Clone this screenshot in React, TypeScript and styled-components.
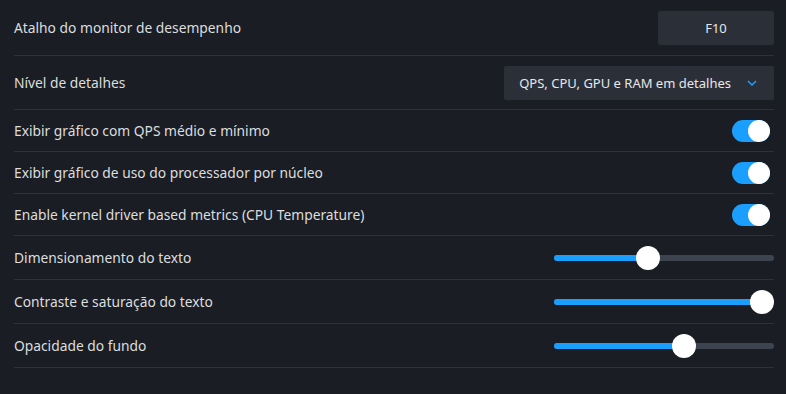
import styled, { createGlobalStyle } from "styled-components";

const GlobalStyle = createGlobalStyle`
    html, body {
        margin: 0;
        padding: 0;
        background: #1a1d24;
    }
    body {
        font-family: "Noto Sans", "Liberation Sans", Arial, sans-serif;
    }
`;

const Wrapper = styled.div`
    display: flex;
    flex-direction: column;
    width: 786px;
    height: 394px;
    padding: 0 12px 0 14px;
    box-sizing: border-box;
    background: #1a1d24;
`;

const Row = styled.div<{ $h: number }>`
    display: flex;
    align-items: center;
    justify-content: space-between;
    height: ${(p) => p.$h}px;
    border-bottom: 1px solid #2c313a;
`;

const Label = styled.span`
    font-size: 13.8px;
    color: #dcdedf;
    white-space: nowrap;
`;

const KeyButton = styled.div`
    width: 116px;
    height: 34px;
    border-radius: 2px;
    background: #2b2f38;
    color: #e6e8ea;
    font-size: 13px;
    display: flex;
    align-items: center;
    justify-content: center;
`;

const Dropdown = styled.div`
    width: 270px;
    height: 34px;
    border-radius: 2px;
    background: #2b2f38;
    color: #e6e8ea;
    font-size: 13px;
    white-space: nowrap;
    display: flex;
    align-items: center;
    gap: 16px;
    padding: 0 17px 0 14px;
    box-sizing: border-box;
    justify-content: flex-end;

    svg {
        flex-shrink: 0;
    }
`;

const Toggle = styled.div<{ $on: boolean }>`
    width: 38px;
    height: 22px;
    border-radius: 11px;
    background: ${(p) => (p.$on ? "#1a9fff" : "#3d4450")};
    display: flex;
    justify-content: ${(p) => (p.$on ? "flex-end" : "flex-start")};
    margin-right: 4px;
`;

const Knob = styled.div`
    width: 22px;
    height: 22px;
    border-radius: 50%;
    background: #ffffff;
`;

const SliderBox = styled.div`
    position: relative;
    width: 220px;
    height: 24px;
    display: flex;
    align-items: center;
`;

const Track = styled.div`
    width: 100%;
    height: 6px;
    border-radius: 3px;
    background: #3d4450;
    overflow: hidden;
`;

const Fill = styled.div`
    height: 100%;
    background: #1a9fff;
`;

const Thumb = styled.div`
    position: absolute;
    top: 0;
    width: 24px;
    height: 24px;
    border-radius: 50%;
    background: #ffffff;
`;

function Slider({ value }: { value: number }) {
    const center = 12 + value * 196;
    return (
        <SliderBox>
            <Track>
                <Fill style={{ width: `${center}px` }} />
            </Track>
            <Thumb style={{ left: `${center - 12}px` }} />
        </SliderBox>
    );
}

const toggles = [
    "Exibir gráfico com QPS médio e mínimo",
    "Exibir gráfico de uso do processador por núcleo",
    "Enable kernel driver based metrics (CPU Temperature)",
];

const sliders = [
    { label: "Dimensionamento do texto", value: 0.42 },
    { label: "Contraste e saturação do texto", value: 1 },
    { label: "Opacidade do fundo", value: 0.6 },
];

export default function App() {
    return (
        <>
            <GlobalStyle />
            <Wrapper>
                <Row $h={55}>
                    <Label>Atalho do monitor de desempenho</Label>
                    <KeyButton>F10</KeyButton>
                </Row>
                <Row $h={53}>
                    <Label>Nível de detalhes</Label>
                    <Dropdown>
                        <span>QPS, CPU, GPU e RAM em detalhes</span>
                        <svg width="10" height="6" viewBox="0 0 10 6">
                            <path d="M1 1 L5 5 L9 1" stroke="#1a9fff" strokeWidth="1.5" fill="none" />
                        </svg>
                    </Dropdown>
                </Row>
                {toggles.map((t) => (
                    <Row $h={41} key={t}>
                        <Label>{t}</Label>
                        <Toggle $on>
                            <Knob />
                        </Toggle>
                    </Row>
                ))}
                {sliders.map((s) => (
                    <Row $h={43} key={s.label}>
                        <Label>{s.label}</Label>
                        <Slider value={s.value} />
                    </Row>
                ))}
            </Wrapper>
        </>
    );
}
